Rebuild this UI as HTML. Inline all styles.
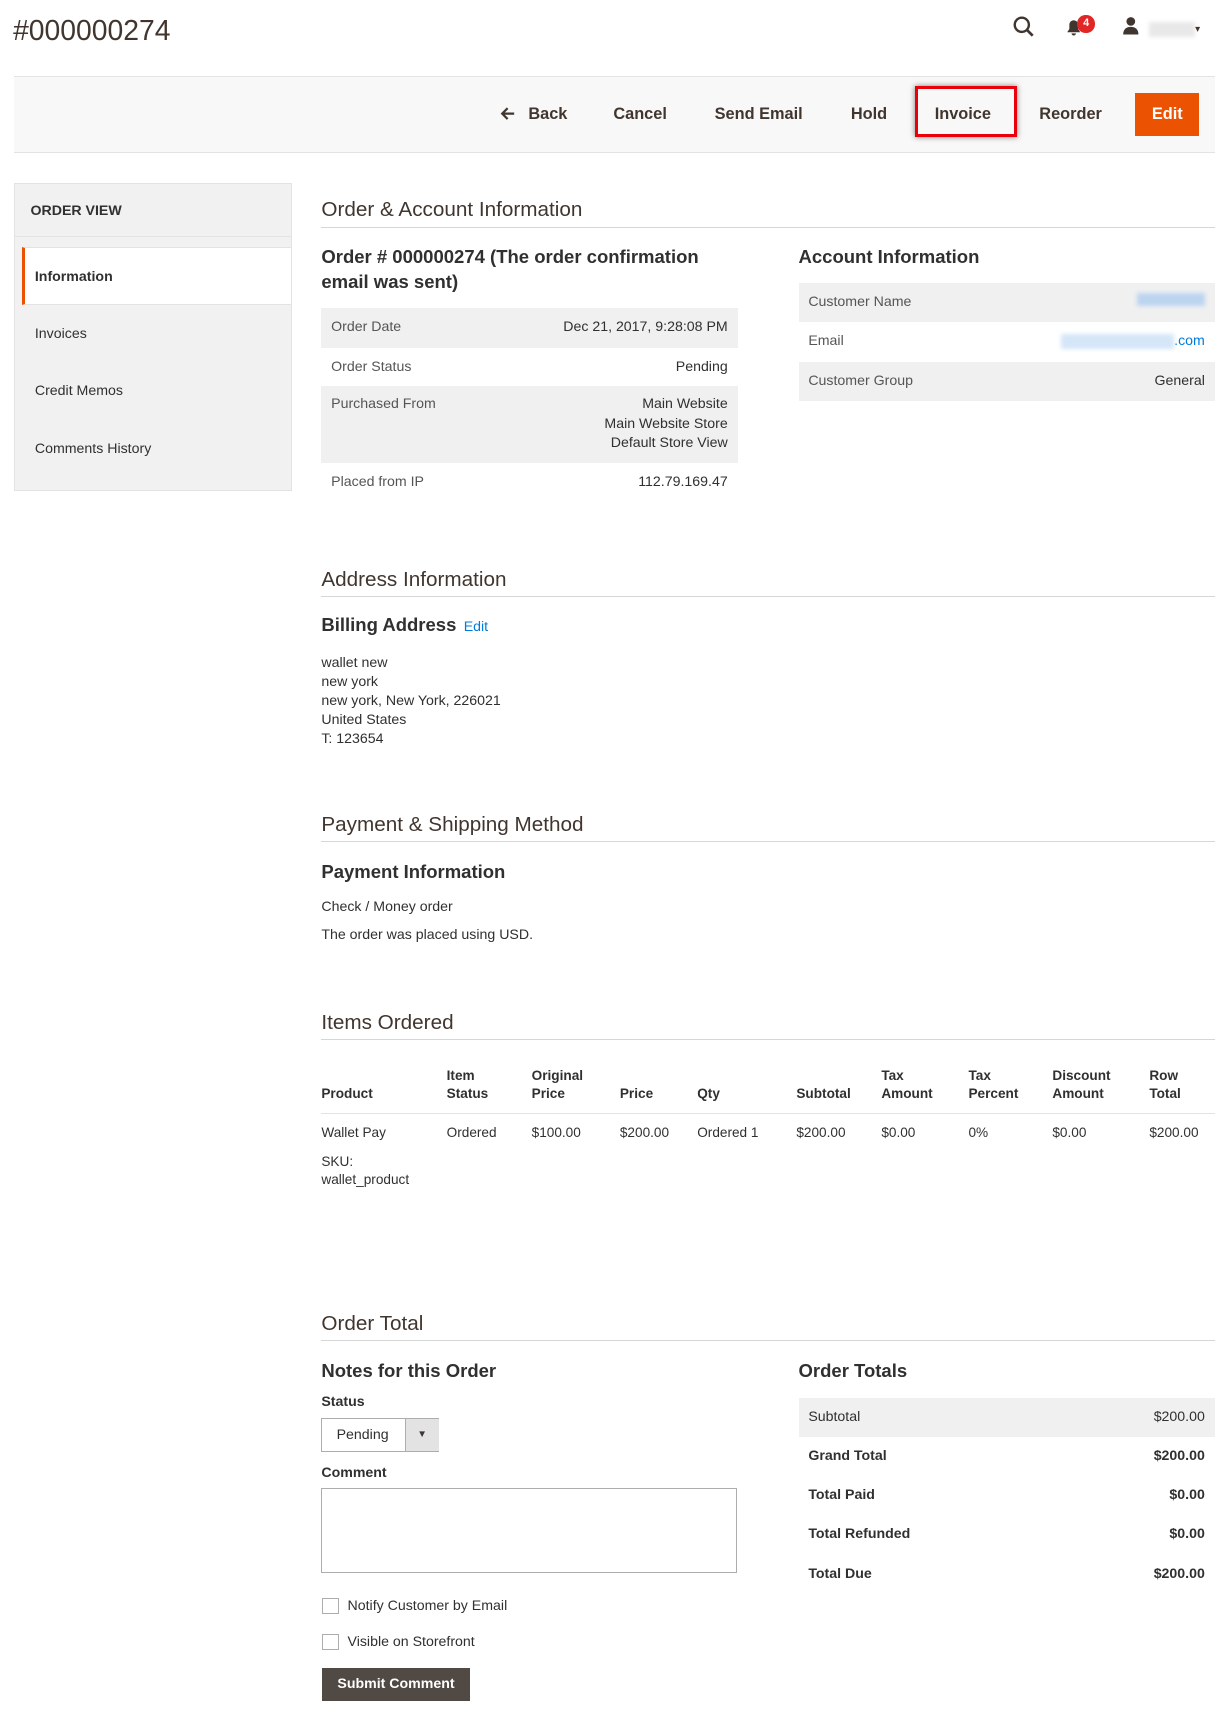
<!DOCTYPE html>
<html><head><meta charset="utf-8"><style>
html,body{margin:0;padding:0;background:#fff}
body{width:1218px;height:1709px;overflow:hidden}
#w{position:relative;width:1118px;height:1569px;zoom:1.0894;font-family:"Liberation Sans",sans-serif;color:#303030;font-size:13px}
.a{position:absolute;white-space:nowrap}
.h2{font-size:19px;color:#41362f}
.line{position:absolute;left:295px;width:820px;height:1px;background:#d6d6d6}
.h3{font-size:17px;font-weight:bold;color:#303030}
.row{position:absolute;height:36px;box-sizing:border-box;padding:0 9px;line-height:36px;font-size:13px}
.g{background:#f0f0f0}
.row .l{color:#555;float:left}.row .r{float:right;text-align:right}
.btn{position:absolute;top:96px;font-size:15px;font-weight:bold;color:#41362f}
.th{position:absolute;font-weight:bold;font-size:12.5px;line-height:17px}
.td{position:absolute;font-size:12.5px}
.cb{position:absolute;left:296px;width:13px;height:13px;border:1px solid #adadad;background:#fff}
</style></head><body><div id="w">
<div class="a" style="left:12px;top:14px;font-size:26px;color:#41362f">#000000274</div>
<svg class="a" style="left:929px;top:14px" width="22" height="22" viewBox="0 0 22 22"><circle cx="9" cy="9" r="6.5" fill="none" stroke="#41362f" stroke-width="2.2"/><path d="M13.5 13.5L19 19" stroke="#41362f" stroke-width="2.5"/></svg>
<svg class="a" style="left:978px;top:16px" width="16" height="18" viewBox="0 0 16 18"><path d="M2 14h12l-2-3V7a4 4 0 0 0-8 0v4z M6 15h4a2 2 0 0 1-4 0z" fill="#41362f"/></svg>
<div class="a" style="left:989px;top:14px;width:16px;height:16px;border-radius:8px;background:#e22626;color:#fff;font-size:10px;font-weight:bold;text-align:center;line-height:16px">4</div>
<svg class="a" style="left:1029px;top:15px" width="18" height="18" viewBox="0 0 18 18"><circle cx="9" cy="5" r="4" fill="#41362f"/><path d="M2 17c0-5 3-7 7-7s7 2 7 7z" fill="#41362f"/></svg>
<div class="a" style="left:1055px;top:20px;width:42px;height:14px;background:#e8e8e8;filter:blur(2px)"></div>
<div class="a" style="left:1097px;top:22px;font-size:9px;color:#41362f">▾</div>

<div class="a" style="left:13px;top:70px;width:1102px;height:69px;background:#f8f8f8;border-top:1px solid #e3e3e3;border-bottom:1px solid #e3e3e3"></div>
<svg class="a" style="left:459px;top:97px" width="14" height="14" viewBox="0 0 14 14"><path d="M13 7H2M7 2L2 7l5 5" fill="none" stroke="#41362f" stroke-width="2"/></svg>
<div class="btn" style="left:485px">Back</div>
<div class="btn" style="left:563px">Cancel</div>
<div class="btn" style="left:656px">Send Email</div>
<div class="btn" style="left:781px">Hold</div>
<div class="a" style="left:840px;top:79px;width:88px;height:41px;border:3px solid #e8000b;box-shadow:0 0 5px rgba(0,0,0,.5)"></div>
<div class="btn" style="left:858px">Invoice</div>
<div class="btn" style="left:954px">Reorder</div>
<div class="a" style="left:1042px;top:85px;width:59px;height:40px;background:#eb5202;color:#fff;font-size:15px;font-weight:bold;text-align:center;line-height:40px">Edit</div>

<div class="a" style="left:13px;top:168px;width:253px;height:281px;background:#f1f1f1;border:1px solid #e3e3e3"></div>
<div class="a" style="left:13px;top:217px;width:255px;height:1px;background:#e3e3e3"></div>
<div class="a" style="left:28px;top:186px;font-size:13px;font-weight:bold;color:#303030">ORDER VIEW</div>
<div class="a" style="left:20px;top:227px;width:247px;height:53px;background:#fff;border-left:3px solid #eb5202;border-top:1px solid #e3e3e3;border-bottom:1px solid #e3e3e3;box-sizing:border-box"></div>
<div class="a" style="left:32px;top:247px;font-weight:bold">Information</div>
<div class="a" style="left:32px;top:299px">Invoices</div>
<div class="a" style="left:32px;top:352px">Credit Memos</div>
<div class="a" style="left:32px;top:405px">Comments History</div>

<div class="a h2" style="left:295px;top:182px">Order &amp; Account Information</div>
<div class="line" style="top:208px"></div>
<div class="a h3" style="left:295px;top:224px;line-height:23px">Order # 000000274 (The order confirmation<br>email was sent)</div>
<div class="row g" style="left:295px;top:283px;width:382px"><span class="l">Order Date</span><span class="r">Dec 21, 2017, 9:28:08 PM</span></div>
<div class="row" style="left:295px;top:319px;width:382px"><span class="l">Order Status</span><span class="r">Pending</span></div>
<div class="row g" style="left:295px;top:354px;width:382px;height:71px;line-height:17.5px;padding-top:9px"><span class="l">Purchased From</span><span class="r">Main Website<br>Main Website Store<br>Default Store View</span></div>
<div class="row" style="left:295px;top:425px;width:382px"><span class="l">Placed from IP</span><span class="r">112.79.169.47</span></div>

<div class="a h3" style="left:733px;top:226px">Account Information</div>
<div class="row g" style="left:733px;top:260px;width:382px"><span class="l">Customer Name</span><span class="r"><span style="display:inline-block;width:62px;height:12px;background:#bcd4f0;filter:blur(2px)"></span></span></div>
<div class="row" style="left:733px;top:296px;width:382px"><span class="l">Email</span><span class="r" style="color:#007bdb"><span style="display:inline-block;width:104px;height:14px;background:#d4e6f8;filter:blur(2px);vertical-align:middle"></span>.com</span></div>
<div class="row g" style="left:733px;top:332px;width:382px"><span class="l">Customer Group</span><span class="r">General</span></div>

<div class="a h2" style="left:295px;top:521px">Address Information</div>
<div class="line" style="top:547px"></div>
<div class="a h3" style="left:295px;top:564px">Billing Address <span style="font-size:13px;font-weight:normal;color:#007bdb;margin-left:2px">Edit</span></div>
<div class="a" style="left:295px;top:600px;line-height:17.5px">wallet new<br>new york<br>new york, New York, 226021<br>United States<br>T: 123654</div>

<div class="a h2" style="left:295px;top:746px">Payment &amp; Shipping Method</div>
<div class="line" style="top:772px"></div>
<div class="a h3" style="left:295px;top:790px">Payment Information</div>
<div class="a" style="left:295px;top:825px">Check / Money order</div>
<div class="a" style="left:295px;top:851px">The order was placed using USD.</div>

<div class="a h2" style="left:295px;top:928px">Items Ordered</div>
<div class="line" style="top:954px"></div>
<div class="th" style="left:295px;top:996px">Product</div>
<div class="th" style="left:410px;top:979px">Item<br>Status</div>
<div class="th" style="left:488px;top:979px">Original<br>Price</div>
<div class="th" style="left:569px;top:996px">Price</div>
<div class="th" style="left:640px;top:996px">Qty</div>
<div class="th" style="left:731px;top:996px">Subtotal</div>
<div class="th" style="left:809px;top:979px">Tax<br>Amount</div>
<div class="th" style="left:889px;top:979px">Tax<br>Percent</div>
<div class="th" style="left:966px;top:979px">Discount<br>Amount</div>
<div class="th" style="left:1055px;top:979px">Row<br>Total</div>
<div class="line" style="top:1022px;background:#e3e3e3"></div>
<div class="td" style="left:295px;top:1033px">Wallet Pay</div>
<div class="td" style="left:410px;top:1033px">Ordered</div>
<div class="td" style="left:488px;top:1033px">$100.00</div>
<div class="td" style="left:569px;top:1033px">$200.00</div>
<div class="td" style="left:640px;top:1033px">Ordered 1</div>
<div class="td" style="left:731px;top:1033px">$200.00</div>
<div class="td" style="left:809px;top:1033px">$0.00</div>
<div class="td" style="left:889px;top:1033px">0%</div>
<div class="td" style="left:966px;top:1033px">$0.00</div>
<div class="td" style="left:1055px;top:1033px">$200.00</div>
<div class="td" style="left:295px;top:1058px;line-height:17px">SKU:<br>wallet_product</div>

<div class="a h2" style="left:295px;top:1204px">Order Total</div>
<div class="line" style="top:1230px"></div>
<div class="a h3" style="left:295px;top:1248px">Notes for this Order</div>
<div class="a" style="left:295px;top:1280px;font-weight:bold">Status</div>
<div class="a" style="left:295px;top:1302px;width:106px;height:29px;border:1px solid #adadad;background:#fff"></div>
<div class="a" style="left:309px;top:1310px">Pending</div>
<div class="a" style="left:372px;top:1303px;width:30px;height:29px;background:#e3e3e3;border-left:1px solid #adadad"></div>
<div class="a" style="left:383px;top:1312px;font-size:9px;color:#41362f">▼</div>
<div class="a" style="left:295px;top:1345px;font-weight:bold">Comment</div>
<div class="a" style="left:295px;top:1366px;width:380px;height:76px;border:1px solid #adadad"></div>
<div class="cb" style="top:1467px"></div>
<div class="a" style="left:319px;top:1467px">Notify Customer by Email</div>
<div class="cb" style="top:1500px"></div>
<div class="a" style="left:319px;top:1500px">Visible on Storefront</div>
<div class="a" style="left:296px;top:1531px;width:135px;height:30px;background:#514943;color:#fff;font-weight:bold;text-align:center;line-height:30px">Submit Comment</div>

<div class="a h3" style="left:733px;top:1248px">Order Totals</div>
<div class="row g" style="left:733px;top:1283px;width:382px"><span class="l" style="color:#303030">Subtotal</span><span class="r">$200.00</span></div>
<div class="row" style="left:733px;top:1319px;width:382px;font-weight:bold"><span class="l" style="color:#303030">Grand Total</span><span class="r">$200.00</span></div>
<div class="row" style="left:733px;top:1355px;width:382px;font-weight:bold"><span class="l" style="color:#303030">Total Paid</span><span class="r">$0.00</span></div>
<div class="row" style="left:733px;top:1391px;width:382px;font-weight:bold"><span class="l" style="color:#303030">Total Refunded</span><span class="r">$0.00</span></div>
<div class="row" style="left:733px;top:1427px;width:382px;font-weight:bold"><span class="l" style="color:#303030">Total Due</span><span class="r">$200.00</span></div>
</div></body></html>
